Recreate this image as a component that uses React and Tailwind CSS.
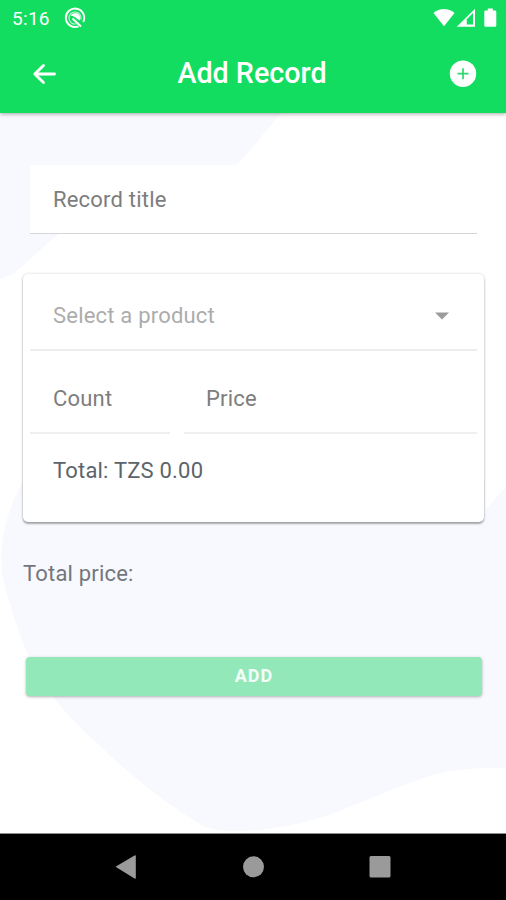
import React, { useState } from 'react';

const StatusBar = () => (
  <div className="flex h-9 items-center justify-between pl-3 pr-[7px] text-white">
    <div className="flex items-center gap-[14px]">
      <span className="text-[19px] leading-none tracking-[0.3px]">5:16</span>
      <svg width="22" height="22" viewBox="0 0 22 22" fill="none" stroke="currentColor">
        <path d="M14.500 19.300A9.200 9.200 0 1 1 19.200 15" strokeWidth="1.900" />
        <path d="M12.500 16.800A6 6 0 1 1 16.800 12.500" strokeWidth="1.200" strokeOpacity=".75" />
        <path d="M6.800 8.800c1.800-3.200 6.400-3.800 8.600-.6 1 1.600 1 3.600.4 5.400L13 11.800c-1.800-2-3.600-2.600-6.200-3z" fill="currentColor" stroke="none" />
        <path d="M8.500 11.500l8.500 8" strokeWidth="2" />
      </svg>
    </div>
    <div className="flex items-center">
      <svg width="22" height="20" viewBox="0 0 22 20" fill="currentColor">
        <path d="M.500 5C6.500-.2 15.500-.2 21.500 5L11 18.200z" />
      </svg>
      <svg className="ml-[1px]" width="20" height="20" viewBox="0 0 20 20" fill="currentColor">
        <path d="M.800 18.700L19 .800v17.900z" />
        <path d="M10.800 16.600V11.200L17 5v11.600z" className="fill-[#12dd60]" />
      </svg>
      <svg className="ml-[7px]" width="16" height="20" viewBox="0 0 16 20" fill="currentColor">
        <path d="M4.800 .500h5v2h2.200a1.300 1.300 0 0 1 1.300 1.300v13.700a1.300 1.300 0 0 1-1.300 1.300H2.600a1.300 1.300 0 0 1-1.300-1.300V3.800a1.300 1.300 0 0 1 1.300-1.300h2.200z" />
      </svg>
    </div>
  </div>
);

const Toolbar = () => (
  <div className="flex h-[75px] items-center justify-between pl-8 pr-[29px] text-white">
    <button type="button" aria-label="Back">
      <svg width="25" height="24" viewBox="0 0 25 24" fill="none" stroke="currentColor" strokeWidth="2.800" strokeLinecap="round" strokeLinejoin="round">
        <path d="M22.500 12H3M11.500 3.500L2.800 12l8.700 8.500" />
      </svg>
    </button>
    <h1 className="mr-[2px] text-[28.700px] font-medium leading-none">Add Record</h1>
    <button type="button" aria-label="Add product">
      <svg width="28" height="28" viewBox="0 0 28 28">
        <circle cx="14" cy="13.700" r="13.200" className="fill-white" />
        <path d="M14 8.200v11M8.500 13.700h11" className="stroke-[#2fd873]" strokeWidth="1.700" />
      </svg>
    </button>
  </div>
);

const Backdrop = () => (
  <svg className="absolute inset-0 -z-10 fill-[#f7f9fe]" width="506" height="720" viewBox="0 0 506 720">
    <path d="M0 0H282C266 17 254 34 238 50C190 98 105 85 55 124L13 161L0 166z" />
    <path d="M24 367C-2 412-4 455 10 490C27 552 50 588 97 630C135 667 165 690 205 714Q240 724 305 709C345 700 410 665 450 658Q480 654 506 655V374L485 397V367z" />
  </svg>
);

const ProductCard = ({ count, price, onCount, onPrice }) => (
  <section className="mt-10 h-[248px] rounded-[5px] bg-white px-[7px] shadow-[0_2px_2px_rgba(0,0,0,0.3),0_0_3px_rgba(0,0,0,0.18)]">
    <button type="button" className="flex h-[77px] w-full items-center justify-between border-b-2 border-[#ececec] pl-[23px] pr-[28px] pt-[9px] text-[#acacac]">
      <span>Select a product</span>
      <svg width="14" height="8" viewBox="0 0 14 8" className="fill-[#9b9b9b]">
        <path d="M0 .500h14L7 7.500z" />
      </svg>
    </button>
    <div className="flex gap-[14px]">
      <input
        value={count}
        onChange={onCount}
        placeholder="Count"
        className="h-[83px] w-[140px] border-b-2 border-[#efefef] pl-[23px] pt-[14px] outline-none placeholder:text-[#7d7d7d]"
      />
      <input
        value={price}
        onChange={onPrice}
        placeholder="Price"
        className="h-[83px] min-w-0 flex-1 border-b-2 border-[#efefef] pl-[22px] pt-[14px] outline-none placeholder:text-[#7d7d7d]"
      />
    </div>
    <p className="mt-6 pl-[23px] text-[#5c646b]">Total: TZS {(count * price).toFixed(2)}</p>
  </section>
);

const NavigationBar = () => (
  <nav className="flex h-[67px] items-center justify-center border-t border-[#8d8d8d] bg-black">
    <svg width="506" height="66" viewBox="0 0 506 66" className="fill-[#9a9a9a]">
      <path d="M115.500 32.800L134.500 21.500q1.300-.7 1.300.8v21.400q0 1.500-1.300.8z" />
      <circle cx="253.500" cy="32.800" r="10.500" />
      <rect x="369.500" y="22" width="21" height="21.500" rx="1.500" />
    </svg>
  </nav>
);

const App = () => {
  const [title, setTitle] = useState('');
  const [count, setCount] = useState('');
  const [price, setPrice] = useState('');

  return (
    <div className="flex h-[900px] w-[506px] flex-col overflow-hidden bg-white font-[Roboto,sans-serif] text-[22px] leading-[26px] tracking-[0.2px]">
      <header className="z-10 h-[113px] shrink-0 bg-[#12dd60] tracking-normal shadow-[0_1px_4px_rgba(0,0,0,0.35)]">
        <StatusBar />
        <Toolbar />
      </header>

      <main className="relative isolate flex-1 pl-[23px] pr-[22px] pt-[52px]">
        <Backdrop />
        <input
          value={title}
          onChange={(e) => setTitle(e.target.value)}
          placeholder="Record title"
          className="mx-[7px] block h-[69px] w-[447px] border-b border-[#d6d6da] bg-white pl-[23px] outline-none placeholder:text-[#7d7d7d]"
        />
        <ProductCard
          count={count}
          price={price}
          onCount={(e) => setCount(e.target.value)}
          onPrice={(e) => setPrice(e.target.value)}
        />
        <p className="mt-[39px] text-[#73767d]">Total price:</p>
        <button
          type="button"
          className="ml-[3px] mt-[70px] block h-[39px] w-[456px] rounded-[4px] bg-[#92e8b8] pb-[2px] text-[18px] font-bold tracking-[1px] text-white/90 shadow-[0_1px_3px_rgba(0,0,0,0.3)]"
        >
          ADD
        </button>
      </main>

      <NavigationBar />
    </div>
  );
};

export default App;
